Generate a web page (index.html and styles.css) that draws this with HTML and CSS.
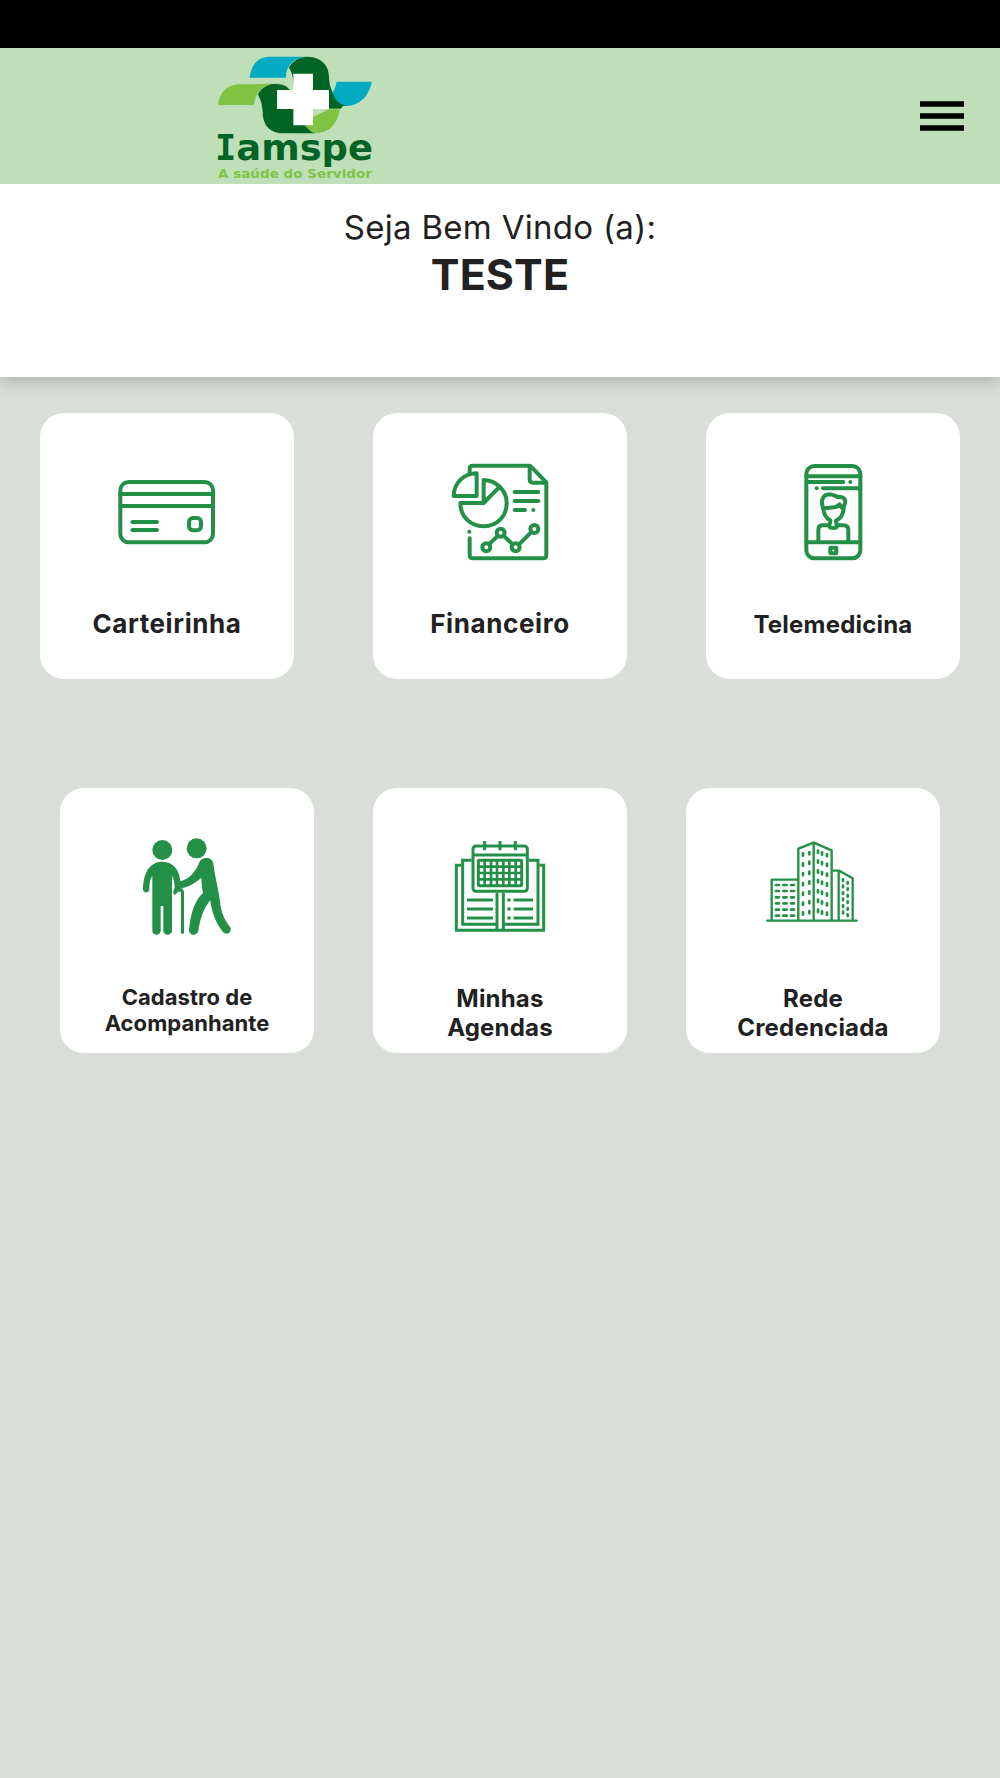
FILE: index.html
```html
<!DOCTYPE html>
<html lang="pt-BR">
<head>
<meta charset="utf-8">
<title>Iamspe</title>
<link rel="stylesheet" href="styles.css">
</head>
<body>
<div class="status-bar"></div>
<header class="app-bar">
  <svg class="logo" viewBox="39 24 492 408" role="img" aria-label="Iamspe">
    <path fill="#03abc2" d="M149 113C153 76 172 51 208 50H322C280 53 258 75 258 113Z"/>
    <path fill="#03abc2" d="M398 158Q407 143 410 125H516C505 170 481 198 430 198L398 185Z"/>
    <path fill="#80c342" d="M54 195C60 154 83 133 120 133L225 131C184 137 165 158 163 195Z"/>
    <path fill="#80c342" d="M420 207C411 254 388 279 345 280H300L310 245L388 207Z"/>
    <path fill="#006425" d="M173 164C184 143 204 131 230 131C250 131 262 137 271 151L300 240L318 257C332 275 345 280 354 280H248C205 277 190 254 187 215C186 193 181 178 173 164Z"/>
    <path fill="#006425" d="M266 83C280 60 300 50 325 50C363 51 387 76 387 111C387 127 391 145 399 159C405 180 417 194 440 197H430L421 207H380L300 150L281 135C279 111 275 94 266 83Z"/>
    <path fill="none" stroke="#bedfb7" stroke-width="2" d="M258 112L266 83C276 98 277 115 279 135M163 195L173 164C185 186 185 202 188 222M225 131C247 131 262 138 270 149M388 207H421M317 257C329 274 341 279 354 280"/>
    <path fill="#fff" d="M280 101H339V150H387V207H339V256H280V207H231V150H280Z"/>
    <text class="logo-name" y="360"><tspan class="logo-initial" x="45">I</tspan><tspan x="109" textLength="410" lengthAdjust="spacingAndGlyphs">amspe</tspan></text>
    <text class="logo-tagline" x="54" y="413" textLength="462" lengthAdjust="spacingAndGlyphs">A saúde do Servidor</text>
  </svg>
  <button class="menu-button" aria-label="Menu">
    <svg class="menu-bars" viewBox="0 0 44 30"><path d="M0 3H44M0 15H44M0 27H44"/></svg>
  </button>
</header>
<section class="welcome">
  <p class="greeting">Seja Bem Vindo (a):</p>
  <h1 class="user-name">TESTE</h1>
</section>
<main class="menu">
  <div class="row row-wide">
    <a class="card">
      <svg class="icon" viewBox="54 39 294 294">
        <rect x="61" y="96" width="278" height="181" rx="25"/>
        <path d="M61 132H339M61 168H339M97 216H171M97 240H171"/>
        <rect x="267" y="204" width="36" height="37" rx="12"/>
      </svg>
      <span class="label label-l">Carteirinha</span>
    </a>
    <a class="card">
      <svg class="icon" viewBox="33 39 294 294">
        <path d="M89 68V56Q89 47 98 47H270L319 97V316Q319 325 310 325H98Q89 325 89 316V265M269 49V88Q269 98 279 98H317"/>
        <path d="M110 70V138H41C42 99 70 71 110 70ZM131 159V90C151 90 165 97 179 110ZM131 159H61C61 199 91 229 131 229C171 229 200 199 200 159C200 140 193 123 179 110"/>
        <path d="M224 126H295M224 153H295M224 180H255M149 281L173 258M192 258L218 283M237 283L273 247"/>
        <circle cx="139" cy="292" r="12"/><circle cx="182" cy="248" r="12"/><circle cx="227" cy="292" r="12"/><circle cx="283" cy="237" r="12"/>
        <circle class="dot" cx="280" cy="180" r="6"/><circle class="dot" cx="88" cy="245" r="6"/>
      </svg>
      <span class="label label-l">Financeiro</span>
    </a>
    <a class="card">
      <svg class="icon" viewBox="12 39 294 294">
        <rect x="79" y="48" width="162" height="277" rx="24"/>
        <path d="M79 79H241M84 96H190M129 115H241M79 277H241"/>
        <circle class="dot" cx="211" cy="96" r="6"/><circle class="dot" cx="110" cy="115" r="6"/>
        <rect x="151" y="293" width="18" height="17" rx="1"/>
        <path d="M115 275V239Q115 226 128 226H145C151 224 151 219 151 211C137 205 132 191 130 176C121 153 127 134 149 133C159 133 165 139 175 141C195 139 200 152 192 168C191 191 183 206 168 212C168 220 170 226 178 226H191Q205 226 205 240V275M129 176C150 171 167 177 179 163Q182 172 191 176M147 226C149 237 170 237 173 226"/>
      </svg>
      <span class="label label-m">Telemedicina</span>
    </a>
  </div>
  <div class="row row-narrow">
    <a class="card">
      <svg class="icon icon-solid" viewBox="23 39 294 294">
        <circle cx="96" cy="75" r="30"/><circle cx="199" cy="70" r="30"/>
        <path d="M66 152V318C67 333 90 333 91 318V243H99V318C101 333 123 333 125 318V152C130 161 133 174 133 188L129 198V207L134 209L144 200C150 198 152 201 152 207V324Q156 330 161 324V202C161 196 158 192 153 189C174 187 193 175 213 158C213 173 215 188 218 204C191 229 181 267 176 314C176 332 198 335 204 319C208 286 219 250 240 226C243 259 257 294 276 319C286 333 307 325 300 307C281 283 271 259 269 228C264 190 253 151 249 117C247 95 216 94 207 111C196 142 176 162 150 169C148 137 130 110 96 110C59 110 39 141 38 193C39 206 56 206 57 193C57 176 59 163 66 152Z"/>
      </svg>
      <span class="label label-s">Cadastro de<br>Acompanhante</span>
    </a>
    <a class="card">
      <svg class="icon icon-square" viewBox="33 39 294 294">
        <rect x="99" y="63" width="163" height="136" rx="9"/>
        <path d="M99 90H262M134 48V76M180 48V76M226 48V76M95 106H68V298H171M266 106H294V298H190M63 121H49V316H311V121H299M171 203V314M190 203V314"/>
        <rect x="115" y="106" width="130" height="76" rx="2"/>
        <path class="cells" d="M115 125H245M115 144H245M115 163H245M134 106V182M153 106V182M171 106V182M190 106V182M208 106V182M227 106V182"/>
        <path d="M81 225H159M81 252H159M81 279H159M221 225H279M221 252H279M221 279H279M202 225H212M202 252H212M202 279H212"/>
      </svg>
      <span class="label label-m">Minhas<br>Agendas</span>
    </a>
    <a class="card">
      <svg class="icon icon-thin" viewBox="28 39 294 294">
        <path d="M38 287H306M51 287V164H130M131 287V71L177 53L231 76V287M177 53V287M232 137H254L294 160V287M252 138V287"/>
        <path class="windows" d="M64 180H73M86 180H96M109 180H118M64 198H73M86 198H96M109 198H118M64 217H73M86 217H96M109 217H118M64 235H73M86 235H96M109 235H118M64 254H73M86 254H96M109 254H118M64 272H73M86 272H96M109 272H118"/>
        <path class="windows" d="M145 85V92M145 115V122M145 144V151M145 174V181M145 203V210M145 233V240M145 262V269M164 81V88M164 110V117M164 140V147M164 169V176M164 199V206M164 228V235M164 258V265"/>
        <path class="windows" d="M190 77V84M190 106V113M190 136V143M190 165V172M190 195V202M190 224V231M190 254V261M202 82V89M202 111V118M202 141V148M202 170V177M202 200V207M202 229V236M202 259V266M217 87V94M217 116V123M217 146V153M217 175V182M217 205V212M217 234V241M217 263V270"/>
        <path class="windows" d="M265 163V168M265 182V187M265 202V207M265 221V226M265 241V246M265 260V265M279 171V176M279 190V195M279 210V215M279 229V234M279 249V254M279 268V273"/>
      </svg>
      <span class="label label-m">Rede<br>Credenciada</span>
    </a>
  </div>
</main>
</body>
</html>
```
FILE: styles.css
```css
* { box-sizing: border-box; }
body {
  margin: 0;
  min-height: 1778px;
  background: #d9ded8;
  color: #212121;
  font-family: Inter, Roboto, sans-serif;
}
.status-bar { height: 48px; background: #000; }
.app-bar {
  position: relative;
  z-index: 1;
  display: flex;
  justify-content: space-between;
  align-items: center;
  height: 136px;
  padding: 0 36px 0 213px;
  background: #bedfb7;
}
.logo { display: block; width: 164px; height: 136px; overflow: visible; }
.logo-name { font: bold 106px "DejaVu Sans", sans-serif; fill: #006425; }
.logo-initial { font-family: "DejaVu Sans Mono", monospace; }
.logo-tagline { font: bold 35px "DejaVu Sans", sans-serif; fill: #80c342; }
.menu-button { padding: 0; border: 0; background: none; }
.menu-bars {
  display: block;
  width: 44px;
  height: 30px;
  fill: none;
  stroke: #000;
  stroke-width: 5.3;
}
.welcome {
  height: 193px;
  padding-top: 22px;
  background: #fff;
  text-align: center;
  box-shadow: 0 2px 16px rgba(0, 0, 0, .25);
}
.greeting { margin: 0; font-size: 33px; line-height: 42px; letter-spacing: .3px; }
.user-name { margin: 0; font-size: 43px; font-weight: 700; line-height: 52px; letter-spacing: .1px; }
.menu { display: flex; flex-direction: column; gap: 109px; padding-top: 36px; }
.row { display: flex; justify-content: space-between; }
.row-wide { padding: 0 40px; }
.row-narrow { padding: 0 60px; }
.card {
  display: flex;
  flex-direction: column;
  align-items: center;
  width: 254px;
  height: 265.5px;
  padding-top: 50px;
  border-radius: 24px;
  background: #fff;
}
.icon {
  width: 98px;
  height: 98px;
  fill: none;
  stroke: #248f47;
  stroke-width: 12;
  stroke-linecap: round;
  stroke-linejoin: round;
}
.icon .dot { fill: #248f47; stroke: none; }
.icon-solid { fill: #248f47; stroke: none; }
.icon-square { stroke-width: 9; stroke-linecap: butt; stroke-linejoin: miter; }
.icon-square .cells { stroke-width: 8; }
.icon-thin { stroke-width: 7; }
.icon-thin .windows { stroke-width: 8; }
.label { font-weight: 700; text-align: center; }
.label-l { margin-top: 47px; font-size: 26px; line-height: 32px; letter-spacing: .6px; }
.label-m { margin-top: 49px; font-size: 24px; line-height: 29px; letter-spacing: .2px; }
.row-narrow .label-m { margin-top: 48px; }
.label-s { margin-top: 48px; font-size: 22px; line-height: 26.5px; letter-spacing: .05px; }
```
